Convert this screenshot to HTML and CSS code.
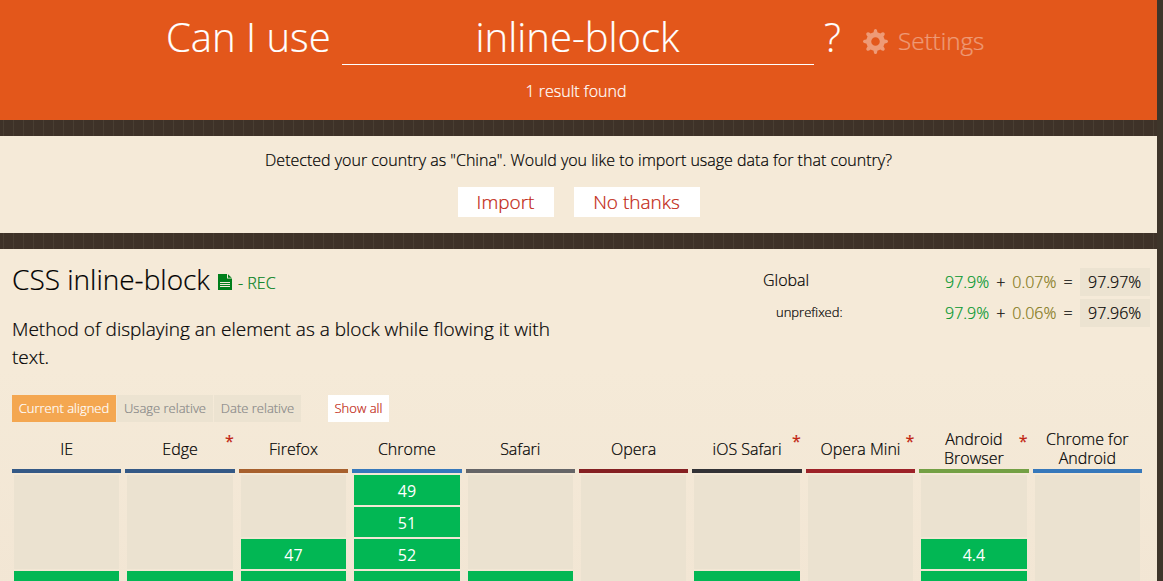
FILE: index.html
```html
<!DOCTYPE html>
<html lang="en">
<head>
<meta charset="utf-8">
<title>Can I use... inline-block</title>
<link rel="stylesheet" href="styles.css">
</head>
<body>
<div class="page">
  <header class="search">
    <div class="search-row">
      <span class="brand">Can I use</span>
      <span class="field">inline-block</span>
      <span class="question">?</span>
      <span class="settings">
        <svg class="gear" viewBox="0 0 24 24"><path fill-rule="evenodd" d="M10.2 3.2 Q10.4 0 12 0 Q13.600 0 13.800 3.200 L16.700 4.400 Q19.100 2.300 20.400 3.600 Q21.700 4.900 19.600 7.300 L20.800 10.200 Q24 10.400 24 12 Q24 13.600 20.800 13.800 L19.600 16.700 Q21.700 19.100 20.400 20.400 Q19.100 21.700 16.700 19.600 L13.800 20.800 Q13.600 24 12 24 Q10.400 24 10.200 20.800 L7.300 19.600 Q4.900 21.700 3.600 20.400 Q2.300 19.100 4.400 16.700 L3.200 13.800 Q0 13.600 0 12 Q0 10.400 3.200 10.200 L4.400 7.300 Q2.300 4.900 3.600 3.600 Q4.900 2.300 7.300 4.400Z M12 7.900a4.100 4.100 0 1 0 0 8.200a4.100 4.100 0 1 0 0-8.200Z"/></svg>
        <span>Settings</span>
      </span>
    </div>
    <p class="found">1 result found</p>
  </header>

  <section class="panel notice">
    <p class="notice-text">Detected your country as "China". Would you like to import usage data for that country?</p>
    <div class="notice-actions">
      <button class="action import">Import</button>
      <button class="action decline">No thanks</button>
    </div>
  </section>

  <main class="panel feature">
    <div class="feature-head">
      <div class="summary">
        <h1 class="title"><span class="name">CSS inline-block</span><svg class="doc" viewBox="0 0 14 16"><path fill="#007f1b" d="M0 0H9V4.500H14V16H0Z"/><path fill="#007f1b" d="M10 .2L13.700 3.700H10Z"/><path stroke="#f5ead8" d="M2 8.500H12M2 10.500H12M2 12.500H12"/></svg><span class="status">- REC</span></h1>
        <p class="description">Method of displaying an element as a block while flowing it with text.</p>
      </div>
      <div class="stats">
        <span class="region">Global</span>
        <span class="numbers"><span class="full">97.9%</span><span>+</span><span class="partial">0.07%</span><span>=</span></span>
        <span class="total">97.97%</span>
        <span class="region minor">unprefixed:</span>
        <span class="numbers"><span class="full">97.9%</span><span>+</span><span class="partial">0.06%</span><span>=</span></span>
        <span class="total">97.96%</span>
      </div>
    </div>

    <div class="modes">
      <span class="mode active">Current aligned</span>
      <span class="mode usage">Usage relative</span>
      <span class="mode date">Date relative</span>
      <span class="mode show">Show all</span>
    </div>

    <div class="browsers">
      <div class="browser ie"><h2>IE</h2><div class="versions"><i class="empty three"></i><b>8</b></div></div>
      <div class="browser edge"><h2>Edge<sup>*</sup></h2><div class="versions"><i class="empty three"></i><b>13</b></div></div>
      <div class="browser firefox"><h2>Firefox</h2><div class="versions"><i class="empty two"></i><b>47</b><b>48</b></div></div>
      <div class="browser chrome"><h2>Chrome</h2><div class="versions"><b>49</b><b>51</b><b>52</b><b>53</b></div></div>
      <div class="browser safari"><h2>Safari</h2><div class="versions"><i class="empty three"></i><b>9.1</b></div></div>
      <div class="browser opera"><h2>Opera</h2><div class="versions"><i class="empty four"></i></div></div>
      <div class="browser ios"><h2>iOS Safari<sup>*</sup></h2><div class="versions"><i class="empty three"></i><b>9.3</b></div></div>
      <div class="browser mini"><h2>Opera Mini<sup>*</sup></h2><div class="versions"><i class="empty four"></i></div></div>
      <div class="browser android"><h2>Android<br>Browser<sup>*</sup></h2><div class="versions"><i class="empty two"></i><b>4.4</b><b></b></div></div>
      <div class="browser chrome"><h2>Chrome for<br>Android</h2><div class="versions"><i class="empty four"></i></div></div>
    </div>
  </main>
</div>
</body>
</html>
```
FILE: styles.css
```css
* { box-sizing: border-box; }
html { height: 100%; overflow: hidden; }
body {
  height: 100%;
  margin: 0;
  overflow: hidden;
  font-family: "Open Sans", sans-serif;
  font-weight: 300;
  font-size: 16px;
  color: #000;
  -webkit-text-stroke: .2px;
  background: repeating-linear-gradient(90deg, #3e3228 0 3px, #493e32 3px 4px, #3e3228 4px 10px);
}
p, h1, h2 { margin: 0; font-weight: inherit; }
.page { width: 1157px; display: flex; flex-direction: column; gap: 16px; box-shadow: 6px 0 #3e352a; }

.search { height: 120px; background: #e3571b; color: #fff; }
.search-row { display: flex; height: 65px; padding-left: 166px; font-size: 40px; line-height: 54px; }
.brand { width: 176px; padding-top: 10px; white-space: nowrap; }
.field { width: 472px; padding: 10px 1px 0 0; border-bottom: 1px solid #fff; text-align: center; }
.question { width: 49px; padding: 10px 0 0 10px; }
.settings { display: flex; align-items: center; gap: 10px; height: 34px; margin-top: 24px; font-size: 24.2px; line-height: 34px; opacity: .4; }
.gear { width: 25px; height: 25px; fill: #fff; }
.found { padding-top: 15px; line-height: 22px; text-align: center; padding-right: 5px; }

.panel { background: #f5ead8; }
.notice { height: 97px; padding-top: 13px; text-align: center; }
.notice-text { line-height: 22px; }
.notice-actions { display: flex; justify-content: center; gap: 20px; margin-top: 16px; }
.action { height: 30px; border: 0; padding: 0; background: #fff; color: #c1230f; font: 300 19px/30px "Open Sans", sans-serif; -webkit-text-stroke: .2px; }
.import { width: 96px; }
.decline { width: 126px; }

.feature { height: 340px; padding: 0 7px 0 12px; background: linear-gradient(#f5ead8 120px, #f2e6d4 340px); }
.feature-head { display: flex; height: 146px; }
.summary { flex: none; width: 751px; padding-top: 9px; }
.title { display: flex; align-items: baseline; height: 42px; font-size: 28px; line-height: 42px; }
.name { width: 206px; white-space: nowrap; }
.doc { width: 14px; height: 16px; align-self: flex-start; margin-top: 16px; }
.status { margin: -1px 0 0 6px; font-size: 16px; line-height: 38px; color: #007f1b; }
.title .status { align-self: flex-start; padding-top: 7px; }
.description { width: 570px; margin-top: 15px; font-size: 19px; line-height: 28px; }
.stats { display: grid; grid-template-columns: 182px 135px 70px; grid-auto-rows: 28px; row-gap: 3px; padding-top: 19px; line-height: 28px; white-space: nowrap; }
.region { line-height: 24px; }
.minor { padding-left: 13px; font-size: 13px; line-height: 26px; }
.numbers { display: flex; gap: 7px; }
.full { color: #00962c; }
.partial { color: #827717; }
.total { padding-left: 8px; background: #ece3d1; }

.modes { display: flex; height: 27px; font-size: 13px; line-height: 27px; text-align: center; }
.mode { background: #ece3d1; color: #888; white-space: nowrap; }
.active { width: 104px; background: #f4a751; color: #fff; }
.usage { width: 96px; margin-left: 1px; }
.date { width: 87px; margin-left: 1px; }
.show { width: 61px; margin-left: 27px; background: #fff; color: #c1230f; }

.browsers { display: grid; grid-template-columns: repeat(10, 1fr); gap: 4px; width: 1130px; margin-top: 7px; }
.browser h2 { position: relative; display: flex; align-items: center; justify-content: center; height: 44px; border-bottom: 4px solid var(--brand); font-size: 16px; line-height: 19px; text-align: center; white-space: nowrap; }
.browser sup { position: absolute; top: 3px; right: 1px; color: #c1230f; font-size: 16px; font-weight: 400; line-height: 19px; }
.ie, .edge { --brand: #345986; }
.firefox { --brand: #a7602d; }
.chrome { --brand: #3678bb; }
.safari { --brand: #656567; }
.opera { --brand: #852022; }
.ios { --brand: #323236; }
.mini { --brand: #9d2228; }
.android { --brand: #73a044; }
.versions { display: flex; flex-direction: column; gap: 2px; padding: 2px 2px 0; }
.versions b { height: 30px; background: #02b754; color: #fff; font-weight: 400; line-height: 32px; text-align: center; -webkit-text-stroke: 0; }
.empty { background: #ebe2d0; }
.two { height: 62px; }
.three { height: 94px; }
.four { height: 126px; }
```
